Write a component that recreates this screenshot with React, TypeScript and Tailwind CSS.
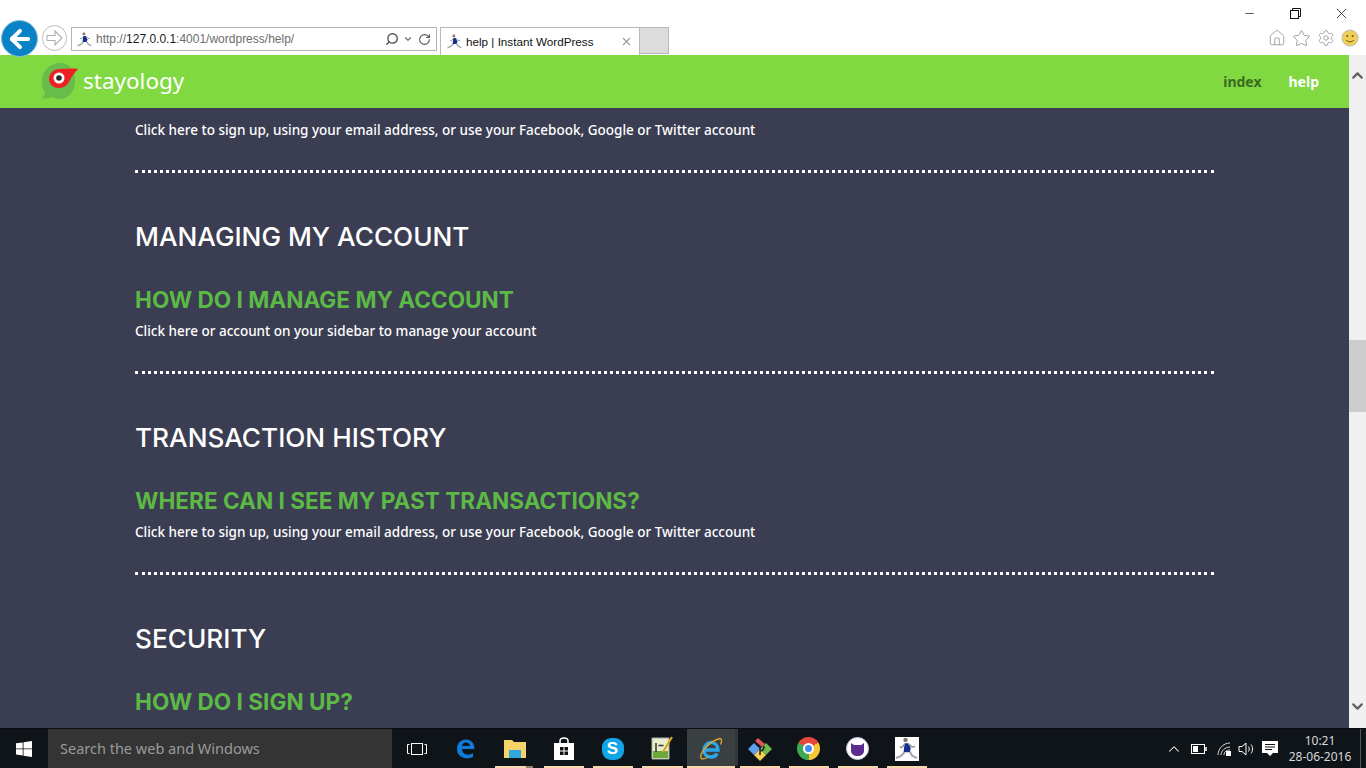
import { ArrowLeft, ChevronDown, ChevronUp, Home, Minus, RotateCw, Search, Settings, Star, X } from 'lucide-react';

const bodyFont = { fontFamily: '"Noto Sans", sans-serif' };
const uiFont = { fontFamily: '"Liberation Sans", sans-serif' };
const headFont = { fontFamily: 'Inter, sans-serif' };

function Runner({ size = 16 }: { size?: number }) {
  return (
    <svg width={size} height={size} viewBox="0 0 24 24" className="shrink-0">
      <circle cx="11" cy="3" r="2.300" fill="#8a7468" />
      <path d="M10 6.500l4 0 2.500 5-1 4.500-6.500 0z" fill="#14308c" />
      <path d="M14 7l4 3.500 3-.5M10 7.500L7 11l-2-1" stroke="#8d939b" strokeWidth="1.500" fill="none" />
      <path d="M10 16l-4 4-5 2M15.500 15.500l2.500 4 5 2.500" stroke="#a2a6ac" strokeWidth="2.200" fill="none" />
    </svg>
  );
}

function BrowserChrome() {
  return (
    <div className="flex h-[55px] shrink-0 flex-col bg-white">
      <div className="flex h-[27px] items-start justify-end pr-[2px] text-black">
        <div className="flex h-[27px] w-[46px] items-center justify-center"><Minus size={13} strokeWidth={1.2} /></div>
        <div className="flex h-[27px] w-[46px] items-center justify-center">
          <svg width="11" height="11" viewBox="0 0 11 11" fill="none" stroke="#111" strokeWidth="1">
            <rect x="0.500" y="2.500" width="8" height="8" />
            <path d="M2.500 2.500v-2h8v8h-2" />
          </svg>
        </div>
        <div className="flex h-[27px] w-[46px] items-center justify-center"><X size={17} strokeWidth={1} /></div>
      </div>
      <div className="relative flex h-[28px] items-start">
        <div className="absolute left-[1px] top-[-7px] flex h-[37px] w-[37px] items-center justify-center rounded-full border border-[#8cc0e0] bg-[#0a82c6]">
          <ArrowLeft size={28} strokeWidth={3.4} className="text-white" />
        </div>
        <div className="absolute left-[42px] top-[-2px] flex h-[26px] w-[25px] items-center justify-center rounded-full border border-[#bdbdbd] bg-white">
          <svg width="17" height="16" viewBox="0 0 17 16" fill="none" stroke="#b0b0b0" strokeWidth="1.100">
            <path d="M9 1l7 7-7 7v-4.500H1v-5h8z" />
          </svg>
        </div>
        <div className="ml-[71px] flex h-[24px] w-[366px] items-center border border-[#b4b4b4] pl-[5px] pr-[5px]" style={uiFont}>
          <Runner size={15} />
          <span className="ml-[4px] flex-1 truncate text-[12px] text-[#6d6d6d]">
            http://<span className="text-[#1a1a1a]">127.0.0.1</span>:4001/wordpress/help/
          </span>
          <Search size={14} strokeWidth={2.4} className="-scale-x-100 text-[#555]" />
          <ChevronDown size={10} strokeWidth={3} className="ml-[4px] text-[#777]" />
          <RotateCw size={13} strokeWidth={2} className="ml-[5px] text-[#555]" />
        </div>
        <div className="ml-[3px] flex h-[28px] w-[200px] items-center border border-b-0 border-[#b9b9b9] pl-[6px] pr-[6px]" style={uiFont}>
          <Runner size={15} />
          <span className="ml-[4px] flex-1 text-[11.700px] text-[#111]">help | Instant WordPress</span>
          <X size={13} strokeWidth={2} className="text-[#9a9a9a]" />
        </div>
        <div className="h-[27px] w-[29px] border border-l-0 border-[#b9b9b9] bg-[#dcdcdc]" />
        <div className="ml-auto mr-[7px] flex h-[22px] items-center gap-[6px] text-[#9a9a9a]">
          <Home size={18} strokeWidth={1.2} />
          <Star size={19} strokeWidth={1.2} />
          <Settings size={18} strokeWidth={1.2} />
          <svg width="18" height="18" viewBox="0 0 18 18">
            <circle cx="9" cy="9" r="8" fill="#f0cf55" stroke="#b9b9b9" />
            <circle cx="6.300" cy="7" r="1" fill="#6a5a20" />
            <circle cx="11.700" cy="7" r="1" fill="#6a5a20" />
            <path d="M5 11c2 2.400 6 2.400 8 0" stroke="#6a5a20" fill="none" />
          </svg>
        </div>
      </div>
    </div>
  );
}

function SiteHeader() {
  return (
    <header className="flex h-[54px] shrink-0 items-center justify-between border-b border-[#3c3d52] bg-[#80d941] pl-[41px] pr-[30px]">
      <div className="flex items-center">
        <svg width="38" height="37" viewBox="0 0 38 37">
          <path d="M19 0C9 0 1 8 1 18c0 5 1 9 3 12 0 2-1 4-3 5 3 1 7 0 10-1 2 1 5 2 8 2 9 0 15-8 15-18C34 8 29 0 19 0z" fill="#68bd4a" />
          <path d="M8 16C8 10 13 6 19 6c6 0 12-1 18 0-3 3-6 7-8 11-2 5-6 8-11 8-6 0-10-4-10-9z" fill="#ed2024" />
          <circle cx="18" cy="15" r="5.500" fill="#fff" />
          <circle cx="18" cy="15" r="2.800" fill="#2a2a2a" />
        </svg>
        <span className="ml-[4px] mt-[-1px] text-[22.500px] font-normal text-white" style={bodyFont}>stayology</span>
      </div>
      <nav className="flex gap-[27px] text-[14px] font-bold" style={bodyFont}>
        <span className="text-[#3c6a22]">index</span>
        <span className="text-white">help</span>
      </nav>
    </header>
  );
}

function Faq({ title, question, answer }: { title: string; question: string; answer?: string }) {
  return (
    <section className="mt-[46px]">
      <h2 className="text-[26.200px] font-medium leading-[36px] text-white" style={headFont}>{title}</h2>
      <h3 className="mt-[31px] text-[22.600px] font-bold leading-[28px] text-[#5cb946]" style={headFont}>{question}</h3>
      {answer && (
        <>
          <p className="mt-[7px] text-[13.500px] font-medium leading-[20px] text-white" style={bodyFont}>{answer}</p>
          <div className="mt-[30px] border-b-[3px] border-dotted border-white" />
        </>
      )}
    </section>
  );
}

function Scrollbar() {
  return (
    <div className="flex w-[17px] shrink-0 flex-col bg-[#f0f0f0] text-[#5f5f5f]">
      <div className="mt-[12px] flex h-[17px] items-center justify-center"><ChevronUp size={17} strokeWidth={3} /></div>
      <div className="mt-[256px] h-[72px] bg-[#cdcdcd]" />
      <div className="mb-[13px] mt-auto flex h-[17px] items-center justify-center"><ChevronDown size={17} strokeWidth={3} /></div>
    </div>
  );
}

const taskIcons = [
  {
    key: 'edge', w: 49, line: false, node: (
      <svg width="20" height="21" viewBox="0 0 20 21" fill="none">
        <path d="M1 11C1 5 5 1.500 10 1.500c5.500 0 8.500 4 8.500 9.500H6c0 6 7 7 11 4v4c-6 3-16 1-16-8z" fill="#0f7ad8" />
        <path d="M6 8c.5-2.500 2-3.500 4-3.500s3.500 1 4 3.500z" fill="#0e1418" />
      </svg>
    ),
  },
  {
    key: 'files', w: 49, line: true, stacked: true, node: (
      <svg width="22" height="20" viewBox="0 0 22 20">
        <path d="M0 1h8l2 2h12v16H0z" fill="#f4d36b" />
        <rect x="5" y="11" width="12" height="8" fill="#2fa8e0" />
      </svg>
    ),
  },
  {
    key: 'store', w: 49, line: true, node: (
      <svg width="22" height="24" viewBox="0 0 22 24">
        <path d="M7 6V4c0-4 8-4 8 0v2" stroke="#fff" strokeWidth="1.500" fill="none" />
        <path d="M1 6h20v17H1z" fill="#fff" />
        <path d="M7 10h3.500v3.500H7zM11.500 10H15v3.500h-3.500zM7 14.500h3.500V18H7zM11.500 14.500H15V18h-3.500z" fill="#111" />
      </svg>
    ),
  },
  {
    key: 'skype', w: 49, line: true, node: (
      <span className="flex h-[22px] w-[22px] items-center justify-center rounded-[9px] bg-[#12a5e6] text-[17px] font-bold text-white" style={uiFont}>S</span>
    ),
  },
  {
    key: 'notepad', w: 50, line: true, node: (
      <svg width="24" height="25" viewBox="0 0 24 25">
        <path d="M2 2h17v21H2z" fill="#e6efc9" stroke="#aaa" />
        <path d="M3 15h15v7H3z" fill="#6aaa3a" />
        <path d="M6 7v9M8.500 9.500h5" stroke="#333" strokeWidth="1.500" />
        <path d="M22 1L13 16" stroke="#d9a520" strokeWidth="2.200" />
      </svg>
    ),
  },
  {
    key: 'ie', w: 48, line: true, active: true, node: (
      <svg width="24" height="24" viewBox="0 0 24 24" fill="none">
        <path d="M5 13h14c0-5-3.500-7.500-7-7.500S5 8.500 5 13.500c0 4.500 3.500 6.500 7 6.500 2.500 0 5-1 6-3.500" stroke="#2aa7ea" strokeWidth="3.400" />
        <path d="M2 21C0 17 10 4 21 1.500c2 0 2 3 .5 6M2 21c1 1.500 4 1 7-1" stroke="#d8a82a" strokeWidth="1.400" />
      </svg>
    ),
  },
  {
    key: 'git', w: 49, line: true, node: (
      <svg width="24" height="24" viewBox="0 0 24 24">
        <path d="M12 12L6 6 0 12l6 6z" fill="#5aa0f0" />
        <path d="M12 12l6-6 6 6-6 6z" fill="#6dbb4a" />
        <path d="M12 12l-6 6 6 6 6-6z" fill="#f4cf5a" />
        <path d="M7 4l3-3 7 6-3 3z" fill="#e0525c" />
        <path d="M12 9v9M16 9c0 4-2 5-4 5" stroke="#222" strokeWidth="1.500" fill="none" />
      </svg>
    ),
  },
  {
    key: 'chrome', w: 49, line: true, node: (
      <span className="relative flex h-[23px] w-[23px] items-center justify-center rounded-full bg-[conic-gradient(from_300deg,#e8473c_0deg_120deg,#f7c833_120deg_240deg,#3ea852_240deg_360deg)]">
        <span className="h-[11px] w-[11px] rounded-full border-2 border-white bg-[#4a8af4]" />
      </span>
    ),
  },
  {
    key: 'cat', w: 49, line: true, node: (
      <span className="flex h-[23px] w-[23px] items-center justify-center rounded-full border border-[#c8bfe0] bg-white">
        <svg width="15" height="14" viewBox="0 0 15 14">
          <path d="M1 1l3 2h7l3-2v8c0 3-3 5-6.500 5S1 12 1 9z" fill="#5c2d91" />
        </svg>
      </span>
    ),
  },
  {
    key: 'runner', w: 49, line: true, node: (
      <span className="flex h-[24px] w-[24px] items-center justify-center bg-white"><Runner size={23} /></span>
    ),
  },
];

function Taskbar() {
  return (
    <footer className="flex h-[40px] shrink-0 items-stretch border-t border-[#0c0d12] bg-[#0e1418] text-white">
      <div className="flex w-[48px] items-center justify-center">
        <svg width="16" height="16" viewBox="0 0 16 16" fill="#fff">
          <path d="M0 2.300l6.700-.9v6.100H0zM7.500 1.300L16 0v7.500H7.500zM0 8.300h6.700v6.200L0 13.600zM7.500 8.300H16V16l-8.500-1.200z" />
        </svg>
      </div>
      <div className="flex w-[344px] items-center bg-[#343434] pl-[12px] text-[14.500px] text-[#9b9b9b]" style={bodyFont}>Search the web and Windows</div>
      <div className="flex w-[49px] items-center justify-center">
        <svg width="20" height="12" viewBox="0 0 20 12" fill="none" stroke="#fff">
          <rect x="4.500" y="0.500" width="11" height="11" />
          <path d="M2.500 1.500h-2v9h2M17.500 1.500h2v9h-2" />
        </svg>
      </div>
      {taskIcons.map((icon) => (
        <div
          key={icon.key}
          className={`relative flex items-center justify-center ${icon.active ? 'bg-[#3a3f42]' : ''}`}
          style={{ width: icon.w }}
        >
          {icon.node}
          {icon.stacked && <span className="absolute bottom-0 left-[5px] right-[6px] h-[2px] bg-[#8c8172]" />}
          {icon.line && (
            <span className={`absolute bottom-0 h-[2px] bg-[#f8d8ac] ${icon.stacked ? 'left-[5px] right-[13px]' : icon.active ? 'left-0 right-0' : 'left-[5px] right-[4px]'}`} />
          )}
          {icon.active && <span className="absolute bottom-[2px] right-[-3px] top-0 w-[3px] bg-[#33373a]" />}
        </div>
      ))}
      <div className="ml-auto flex items-center pr-[5px]" style={bodyFont}>
        <ChevronUp size={18} strokeWidth={1.400} />
        <svg width="16" height="10" viewBox="0 0 16 10" fill="none" stroke="#fff" className="ml-[8px]">
          <rect x="0.500" y="0.500" width="13" height="9" />
          <rect x="2" y="2" width="5" height="6" fill="#fff" stroke="none" />
          <path d="M15 3v4" strokeWidth="1.500" />
        </svg>
        <svg width="14" height="14" viewBox="0 0 14 14" fill="none" stroke="#d8d8d8" className="ml-[10px]">
          <path d="M1 13C1 7 6 1 13 1M4 13c0-4 4-8 9-8M7 13c0-3 2-5 6-5" />
          <rect x="9" y="9" width="5" height="5" fill="#fff" stroke="none" />
        </svg>
        <svg width="17" height="14" viewBox="0 0 17 14" fill="none" stroke="#fff" className="ml-[7px]">
          <path d="M1 4.500h3L8 1v12L4 9.500H1zM10.500 4.500c1 1.500 1 3.500 0 5M13 2.500c2 2.500 2 6.500 0 9" />
        </svg>
        <svg width="16" height="16" viewBox="0 0 16 16" className="ml-[7px]" fill="#fff">
          <path d="M0 0h16v12h-5l-3 3-3-3H0z" />
          <path d="M3 3.500h10M3 6h10M3 8.500h7" stroke="#111" />
        </svg>
        <div className="ml-[9px] w-[66px] text-center text-[12px] leading-[16px] text-[#d8d8d8]">
          <div>10:21</div>
          <div>28-06-2016</div>
        </div>
        <div className="ml-[7px] h-full w-px bg-[#555]" />
      </div>
    </footer>
  );
}

export default function App() {
  return (
    <div className="flex h-screen w-full flex-col overflow-hidden bg-[#3b3d52]">
      <BrowserChrome />
      <div className="flex min-h-0 flex-1">
        <div className="flex min-w-0 flex-1 flex-col">
          <SiteHeader />
          <main className="min-h-0 flex-1 overflow-hidden px-[135px] pt-[11px]">
            <p className="text-[13.500px] font-medium leading-[20px] text-white" style={bodyFont}>
              Click here to sign up, using your email address, or use your Facebook, Google or Twitter account
            </p>
            <div className="mt-[30px] border-b-[3px] border-dotted border-white" />
            <Faq title="MANAGING MY ACCOUNT" question="HOW DO I MANAGE MY ACCOUNT" answer="Click here or account on your sidebar to manage your account" />
            <Faq title="TRANSACTION HISTORY" question="WHERE CAN I SEE MY PAST TRANSACTIONS?" answer="Click here to sign up, using your email address, or use your Facebook, Google or Twitter account" />
            <Faq title="SECURITY" question="HOW DO I SIGN UP?" />
          </main>
        </div>
        <Scrollbar />
      </div>
      <Taskbar />
    </div>
  );
}
